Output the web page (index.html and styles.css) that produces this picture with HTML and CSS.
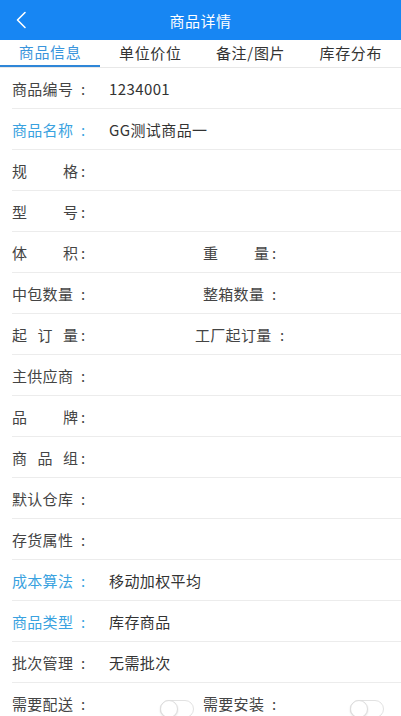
FILE: index.html
```html
<!DOCTYPE html>
<html lang="zh">
<head>
<meta charset="utf-8">
<title>商品详情</title>
<link rel="stylesheet" href="styles.css">
</head>
<body>
<div class="app">
  <header class="topbar">
    <span class="back"><svg width="12" height="18" viewBox="0 0 12 18"><path d="M10 1.5 L2.5 9 L10 16.5" fill="none" stroke="#fff" stroke-width="1.6" stroke-linecap="round" stroke-linejoin="round"/></svg></span>
    <h1 class="title">商品详情</h1>
  </header>
  <nav class="tabs">
    <div class="tab active">商品信息</div>
    <div class="tab">单位价位</div>
    <div class="tab">备注/图片</div>
    <div class="tab">库存分布</div>
  </nav>
  <main class="list">
    <div class="row"><span class="lbl">商品编号</span><span class="colon">:</span><span class="val">1234001</span></div>
    <div class="row"><span class="lbl blue">商品名称</span><span class="colon blue">:</span><span class="val">GG测试商品一</span></div>
    <div class="row"><span class="lbl just">规格</span><span class="colon">:</span></div>
    <div class="row"><span class="lbl just">型号</span><span class="colon">:</span></div>
    <div class="row">
      <div class="half"><span class="lbl just">体积</span><span class="colon">:</span></div>
      <div class="half2"><span class="lbl just">重量</span><span class="colon">:</span></div>
    </div>
    <div class="row">
      <div class="half"><span class="lbl">中包数量</span><span class="colon">:</span></div>
      <div class="half2"><span class="lbl">整箱数量</span><span class="colon">:</span></div>
    </div>
    <div class="row">
      <div class="half"><span class="lbl just">起订量</span><span class="colon">:</span></div>
      <div class="half2 wide"><span class="lbl">工厂起订量</span><span class="colon">:</span></div>
    </div>
    <div class="row"><span class="lbl">主供应商</span><span class="colon">:</span></div>
    <div class="row"><span class="lbl just">品牌</span><span class="colon">:</span></div>
    <div class="row"><span class="lbl just">商品组</span><span class="colon">:</span></div>
    <div class="row"><span class="lbl">默认仓库</span><span class="colon">:</span></div>
    <div class="row"><span class="lbl">存货属性</span><span class="colon">:</span></div>
    <div class="row"><span class="lbl blue">成本算法</span><span class="colon blue">:</span><span class="val">移动加权平均</span></div>
    <div class="row"><span class="lbl blue">商品类型</span><span class="colon blue">:</span><span class="val">库存商品</span></div>
    <div class="row"><span class="lbl">批次管理</span><span class="colon">:</span><span class="val">无需批次</span></div>
    <div class="row">
      <div class="half"><span class="lbl">需要配送</span><span class="colon">:</span><span class="switch"><span class="knob"></span></span></div>
      <div class="half2 last"><span class="lbl">需要安装</span><span class="colon">:</span><span class="switch"><span class="knob"></span></span></div>
    </div>
  </main>
</div>
</body>
</html>
```

FILE: styles.css
```css
* { box-sizing: border-box; }
html, body { margin: 0; padding: 0; background: #fff; }
body {
  font-family: "Noto Sans CJK SC", "Noto Sans", sans-serif;
  color: #333;
  width: 401px;
  height: 716px;
  overflow: hidden;
}
.topbar {
  height: 40px;
  background: #1786f3;
  display: flex;
  align-items: center;
  justify-content: center;
  position: relative;
}
.back {
  position: absolute;
  left: 15px;
  top: 11px;
  display: flex;
}
.title {
  margin: 0;
  font-size: 15px;
  font-weight: normal;
  color: #fff;
  letter-spacing: 0.5px;
}
.tabs {
  display: grid;
  grid-template-columns: repeat(4, 1fr);
  height: 28px;
  border-bottom: 1px solid #e8e8e8;
}
.tab {
  display: flex;
  align-items: center;
  justify-content: center;
  font-size: 15px;
  color: #333;
  letter-spacing: 0.7px;
  padding-bottom: 2px;
}
.tab.active {
  color: #3a95dc;
  border-bottom: 2px solid #2f87d8;
}
.list { display: flex; flex-direction: column; }
.row {
  height: 41px;
  margin-left: 12px;
  border-bottom: 1px solid #ececec;
  display: flex;
  align-items: center;
  font-size: 15px;
  color: #444;
}
.row:last-child { border-bottom: none; }
.lbl {
  display: inline-block;
  width: 69px;
  letter-spacing: 0.3px;
  white-space: nowrap;
}
.lbl.just {
  width: 66px;
  margin-right: 3px;
  text-align: justify;
  text-align-last: justify;
  letter-spacing: 0;
}
.colon { width: 28px; }
.blue { color: #3aa2e0; }
.val { color: #333; letter-spacing: 0.4px; }
.half {
  width: 191px;
  height: 100%;
  display: flex;
  align-items: center;
}
.half2 {
  flex: 1;
  height: 100%;
  display: flex;
  align-items: center;
}
.half2.wide .lbl { width: 85px; margin-left: -8px; }
.switch {
  margin-left: auto;
  margin-right: 9px;
  width: 34px;
  height: 18px;
  border: 1px solid #e2e2e2;
  border-radius: 9px;
  background: #fff;
  position: relative;
  margin-top: 10px;
}
.half2.last .switch { margin-right: 17px; }
.knob {
  position: absolute;
  left: -1px;
  top: -1px;
  width: 18px;
  height: 18px;
  border-radius: 50%;
  background: #fff;
  border: 1px solid #ddd;
  box-shadow: 0 1px 2px rgba(0,0,0,0.12);
}
```
